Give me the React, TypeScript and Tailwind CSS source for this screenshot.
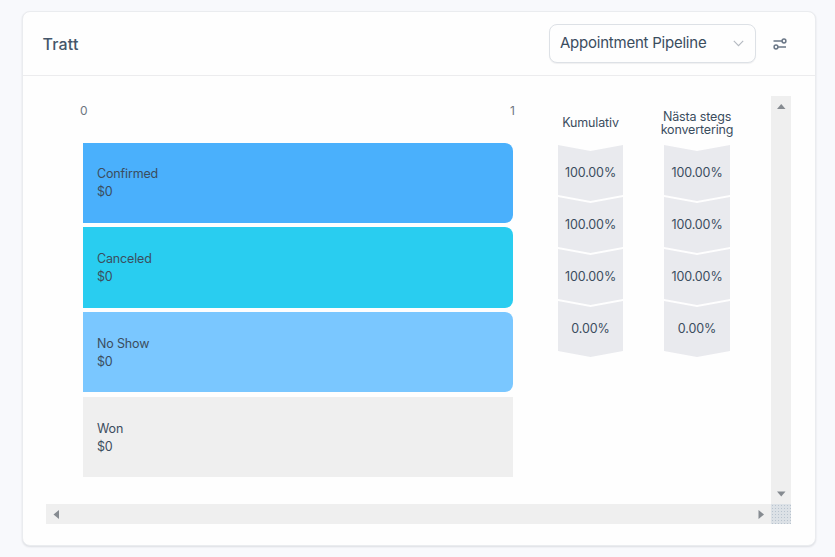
interface Stage {
  name: string
  value: string
  bar: string
  cumulative: string
  next: string
}

const stages: Stage[] = [
  { name: 'Confirmed', value: '$0', bar: 'rounded-r-lg bg-[#4ab0fc]', cumulative: '100.00%', next: '100.00%' },
  { name: 'Canceled', value: '$0', bar: 'rounded-r-lg bg-[#29cdf0]', cumulative: '100.00%', next: '100.00%' },
  { name: 'No Show', value: '$0', bar: 'rounded-r-lg bg-[#7ac7ff]', cumulative: '100.00%', next: '100.00%' },
  { name: 'Won', value: '$0', bar: 'bg-[#efefef]', cumulative: '0.00%', next: '0.00%' },
]

function FilterIcon() {
  return (
    <svg width="14" height="12" viewBox="0 0 14 12" fill="none" stroke="#6b7787" strokeWidth="1.5">
      <path d="M.5 3H9M5 9h8" />
      <circle cx="11" cy="3" r="1.9" />
      <circle cx="3" cy="9" r="1.9" />
    </svg>
  )
}

function Arrow({ points }: { points: string }) {
  return (
    <svg width="20" height="20" viewBox="0 0 20 20" className="flex-none">
      <polygon points={points} fill="#868b91" />
    </svg>
  )
}

function ConversionColumn({ title, values, width }: { title: string; values: string[]; width: string }) {
  return (
    <div className={`${width} flex flex-col items-center`}>
      <div className="flex h-[49px] items-center justify-center whitespace-pre pt-1 text-center text-[12.5px] leading-[13px] tracking-[-0.15px]">
        {title}
      </div>
      {values.map((value, i) => (
        <div
          key={i}
          className="-mb-1 flex h-14 w-full flex-none items-center justify-center bg-[#e9eaee] text-[12.5px] tracking-[-0.1px] [clip-path:polygon(0_0,50%_6px,100%_0,100%_50px,50%_100%,0_50px)]"
        >
          {value}
        </div>
      ))}
    </div>
  )
}

export default function App() {
  return (
    <div className="h-[557px] w-[835px] bg-[#f8f9fc] pt-[11px] pl-[22px] font-['Inter',sans-serif] text-[#3b4d5e]">
      <div className="flex h-[535px] w-[794px] flex-col rounded-lg border border-[#eaecef] bg-[#fefefe] shadow-[0_1px_2px_rgba(16,24,40,0.12)]">
        {/* Header */}
        <div className="flex h-16 flex-none items-center border-b border-[#ececee] pl-[19.5px] pr-7">
          <h2 className="flex-1 text-base font-medium tracking-[0.2px] text-[#45566a]">Tratt</h2>
          <button className="flex h-[39px] w-[207px] items-center justify-between rounded-lg border border-[#dde1e6] bg-[#fefefe] pl-[10px] pr-[11px] text-[15px] tracking-[-0.23px] shadow-[0_1px_1px_rgba(16,24,40,0.06)]">
            Appointment Pipeline
            <svg width="11" height="7" viewBox="0 0 11 7" fill="none" stroke="#b4b9c0" strokeWidth="1.1">
              <path d="M.8 .8l4.7 4.8L10.2 .8" />
            </svg>
          </button>
          <div className="ml-[17px]">
            <FilterIcon />
          </div>
        </div>

        {/* Scroll area */}
        <div className="mt-5 ml-[23px] flex h-[408px] w-[745px]">
          <div className="flex flex-1 pl-[37px]">
            <div className="w-[430px]">
              <div className="-ml-[3px] -mr-[2px] flex h-[46.5px] justify-between pt-[7px] text-xs leading-4 text-[#6e7680]">
                <span>0</span>
                <span>1</span>
              </div>
              <div className="flex flex-col gap-[4.5px]">
                {stages.map((s) => (
                  <div
                    key={s.name}
                    className={`flex h-[80.3px] flex-col justify-center pt-px pl-[14px] text-[12.5px] leading-[18px] tracking-[-0.15px] ${s.bar}`}
                  >
                    <span>{s.name}</span>
                    <span>{s.value}</span>
                  </div>
                ))}
              </div>
            </div>
            <div className="ml-[45px] flex gap-[41px]">
              <ConversionColumn title="Kumulativ" values={stages.map((s) => s.cumulative)} width="w-[65px]" />
              <ConversionColumn title={'Nästa stegs\nkonvertering'} values={stages.map((s) => s.next)} width="w-[66px]" />
            </div>
          </div>
          <div className="flex w-5 flex-none flex-col justify-between bg-[#efefef]">
            <Arrow points="6,13 14.5,13 10.25,8" />
            <Arrow points="6,7.5 14.5,7.5 10.25,12.5" />
          </div>
        </div>
        <div className="ml-[23px] flex h-5 w-[745px]">
          <div className="flex flex-1 justify-between bg-[#efefef]">
            <Arrow points="13,6 13,15 7.5,10.5" />
            <Arrow points="7.5,6 7.5,15 13,10.5" />
          </div>
          <div className="h-5 w-5 bg-[#dce1e6] bg-[radial-gradient(#b9c4cf_0.8px,transparent_0.9px)] bg-[size:3px_3px]" />
        </div>
      </div>
    </div>
  )
}
